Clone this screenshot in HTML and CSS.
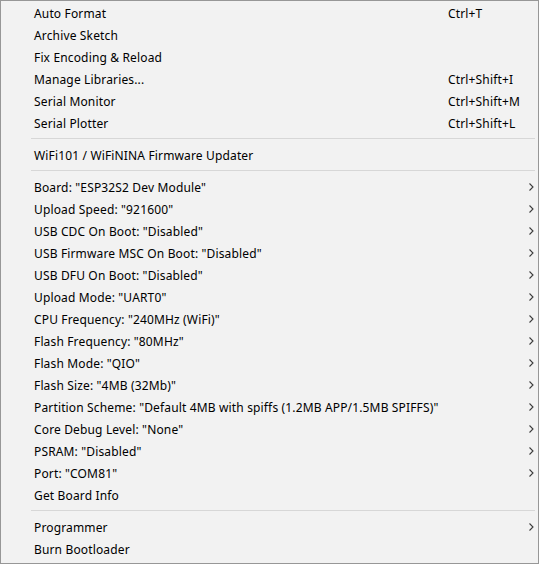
FILE: index.html
```html
<!DOCTYPE html>
<html>
<head>
<meta charset="utf-8">
<link rel="stylesheet" href="styles.css">
</head>
<body>
<div class="menu">
  <div class="item"><span class="label">Auto Format</span><span class="key">Ctrl+T</span><span class="sub"></span></div>
  <div class="item"><span class="label">Archive Sketch</span><span class="key"></span><span class="sub"></span></div>
  <div class="item"><span class="label">Fix Encoding &amp; Reload</span><span class="key"></span><span class="sub"></span></div>
  <div class="item"><span class="label">Manage Libraries...</span><span class="key">Ctrl+Shift+I</span><span class="sub"></span></div>
  <div class="item"><span class="label">Serial Monitor</span><span class="key">Ctrl+Shift+M</span><span class="sub"></span></div>
  <div class="item"><span class="label">Serial Plotter</span><span class="key">Ctrl+Shift+L</span><span class="sub"></span></div>
  <div class="sep"></div>
  <div class="item"><span class="label">WiFi101 / WiFiNINA Firmware Updater</span><span class="key"></span><span class="sub"></span></div>
  <div class="sep"></div>
  <div class="item"><span class="label">Board: "ESP32S2 Dev Module"</span><span class="key"></span><span class="sub"><svg class="arrow" width="5" height="8" viewBox="0 0 5 8"><path d="M0.5 0.5 L4 4 L0.5 7.5" fill="none" stroke="#3c3c3c" stroke-width="1.1"/></svg></span></div>
  <div class="item"><span class="label">Upload Speed: "921600"</span><span class="key"></span><span class="sub"><svg class="arrow" width="5" height="8" viewBox="0 0 5 8"><path d="M0.5 0.5 L4 4 L0.5 7.5" fill="none" stroke="#3c3c3c" stroke-width="1.1"/></svg></span></div>
  <div class="item"><span class="label">USB CDC On Boot: "Disabled"</span><span class="key"></span><span class="sub"><svg class="arrow" width="5" height="8" viewBox="0 0 5 8"><path d="M0.5 0.5 L4 4 L0.5 7.5" fill="none" stroke="#3c3c3c" stroke-width="1.1"/></svg></span></div>
  <div class="item"><span class="label">USB Firmware MSC On Boot: "Disabled"</span><span class="key"></span><span class="sub"><svg class="arrow" width="5" height="8" viewBox="0 0 5 8"><path d="M0.5 0.5 L4 4 L0.5 7.5" fill="none" stroke="#3c3c3c" stroke-width="1.1"/></svg></span></div>
  <div class="item"><span class="label">USB DFU On Boot: "Disabled"</span><span class="key"></span><span class="sub"><svg class="arrow" width="5" height="8" viewBox="0 0 5 8"><path d="M0.5 0.5 L4 4 L0.5 7.5" fill="none" stroke="#3c3c3c" stroke-width="1.1"/></svg></span></div>
  <div class="item"><span class="label">Upload Mode: "UART0"</span><span class="key"></span><span class="sub"><svg class="arrow" width="5" height="8" viewBox="0 0 5 8"><path d="M0.5 0.5 L4 4 L0.5 7.5" fill="none" stroke="#3c3c3c" stroke-width="1.1"/></svg></span></div>
  <div class="item"><span class="label">CPU Frequency: "240MHz (WiFi)"</span><span class="key"></span><span class="sub"><svg class="arrow" width="5" height="8" viewBox="0 0 5 8"><path d="M0.5 0.5 L4 4 L0.5 7.5" fill="none" stroke="#3c3c3c" stroke-width="1.1"/></svg></span></div>
  <div class="item"><span class="label">Flash Frequency: "80MHz"</span><span class="key"></span><span class="sub"><svg class="arrow" width="5" height="8" viewBox="0 0 5 8"><path d="M0.5 0.5 L4 4 L0.5 7.5" fill="none" stroke="#3c3c3c" stroke-width="1.1"/></svg></span></div>
  <div class="item"><span class="label">Flash Mode: "QIO"</span><span class="key"></span><span class="sub"><svg class="arrow" width="5" height="8" viewBox="0 0 5 8"><path d="M0.5 0.5 L4 4 L0.5 7.5" fill="none" stroke="#3c3c3c" stroke-width="1.1"/></svg></span></div>
  <div class="item"><span class="label">Flash Size: "4MB (32Mb)"</span><span class="key"></span><span class="sub"><svg class="arrow" width="5" height="8" viewBox="0 0 5 8"><path d="M0.5 0.5 L4 4 L0.5 7.5" fill="none" stroke="#3c3c3c" stroke-width="1.1"/></svg></span></div>
  <div class="item"><span class="label">Partition Scheme: "Default 4MB with spiffs (1.2MB APP/1.5MB SPIFFS)"</span><span class="key"></span><span class="sub"><svg class="arrow" width="5" height="8" viewBox="0 0 5 8"><path d="M0.5 0.5 L4 4 L0.5 7.5" fill="none" stroke="#3c3c3c" stroke-width="1.1"/></svg></span></div>
  <div class="item"><span class="label">Core Debug Level: "None"</span><span class="key"></span><span class="sub"><svg class="arrow" width="5" height="8" viewBox="0 0 5 8"><path d="M0.5 0.5 L4 4 L0.5 7.5" fill="none" stroke="#3c3c3c" stroke-width="1.1"/></svg></span></div>
  <div class="item"><span class="label">PSRAM: "Disabled"</span><span class="key"></span><span class="sub"><svg class="arrow" width="5" height="8" viewBox="0 0 5 8"><path d="M0.5 0.5 L4 4 L0.5 7.5" fill="none" stroke="#3c3c3c" stroke-width="1.1"/></svg></span></div>
  <div class="item"><span class="label">Port: "COM81"</span><span class="key"></span><span class="sub"><svg class="arrow" width="5" height="8" viewBox="0 0 5 8"><path d="M0.5 0.5 L4 4 L0.5 7.5" fill="none" stroke="#3c3c3c" stroke-width="1.1"/></svg></span></div>
  <div class="item"><span class="label">Get Board Info</span><span class="key"></span><span class="sub"></span></div>
  <div class="sep"></div>
  <div class="item"><span class="label">Programmer</span><span class="key"></span><span class="sub"><svg class="arrow" width="5" height="8" viewBox="0 0 5 8"><path d="M0.5 0.5 L4 4 L0.5 7.5" fill="none" stroke="#3c3c3c" stroke-width="1.1"/></svg></span></div>
  <div class="item"><span class="label">Burn Bootloader</span><span class="key"></span><span class="sub"></span></div>
</div>
</body>
</html>
```

FILE: styles.css
```css
html, body {
  margin: 0;
  padding: 0;
  background: #f2f2f2;
}
.menu {
  box-sizing: border-box;
  width: 539px;
  height: 564px;
  border: 1px solid #979797;
  background: #f2f2f2;
  padding: 1px 0 3px 0;
  font-family: "Noto Sans", sans-serif;
  font-size: 12px;
  letter-spacing: 0.15px;
  color: #000;
}
.item {
  display: flex;
  align-items: center;
  height: 22px;
  padding-left: 33px;
  white-space: nowrap;
}
.label {
  flex: 1;
}
.key {
  width: 81px;
}
.sub {
  width: 9px;
  display: flex;
  align-items: center;
}
.arrow {
  display: block;
}
.sep {
  height: 1px;
  background: #d7d7d7;
  margin: 4px 3px 5px 30px;
}
```
